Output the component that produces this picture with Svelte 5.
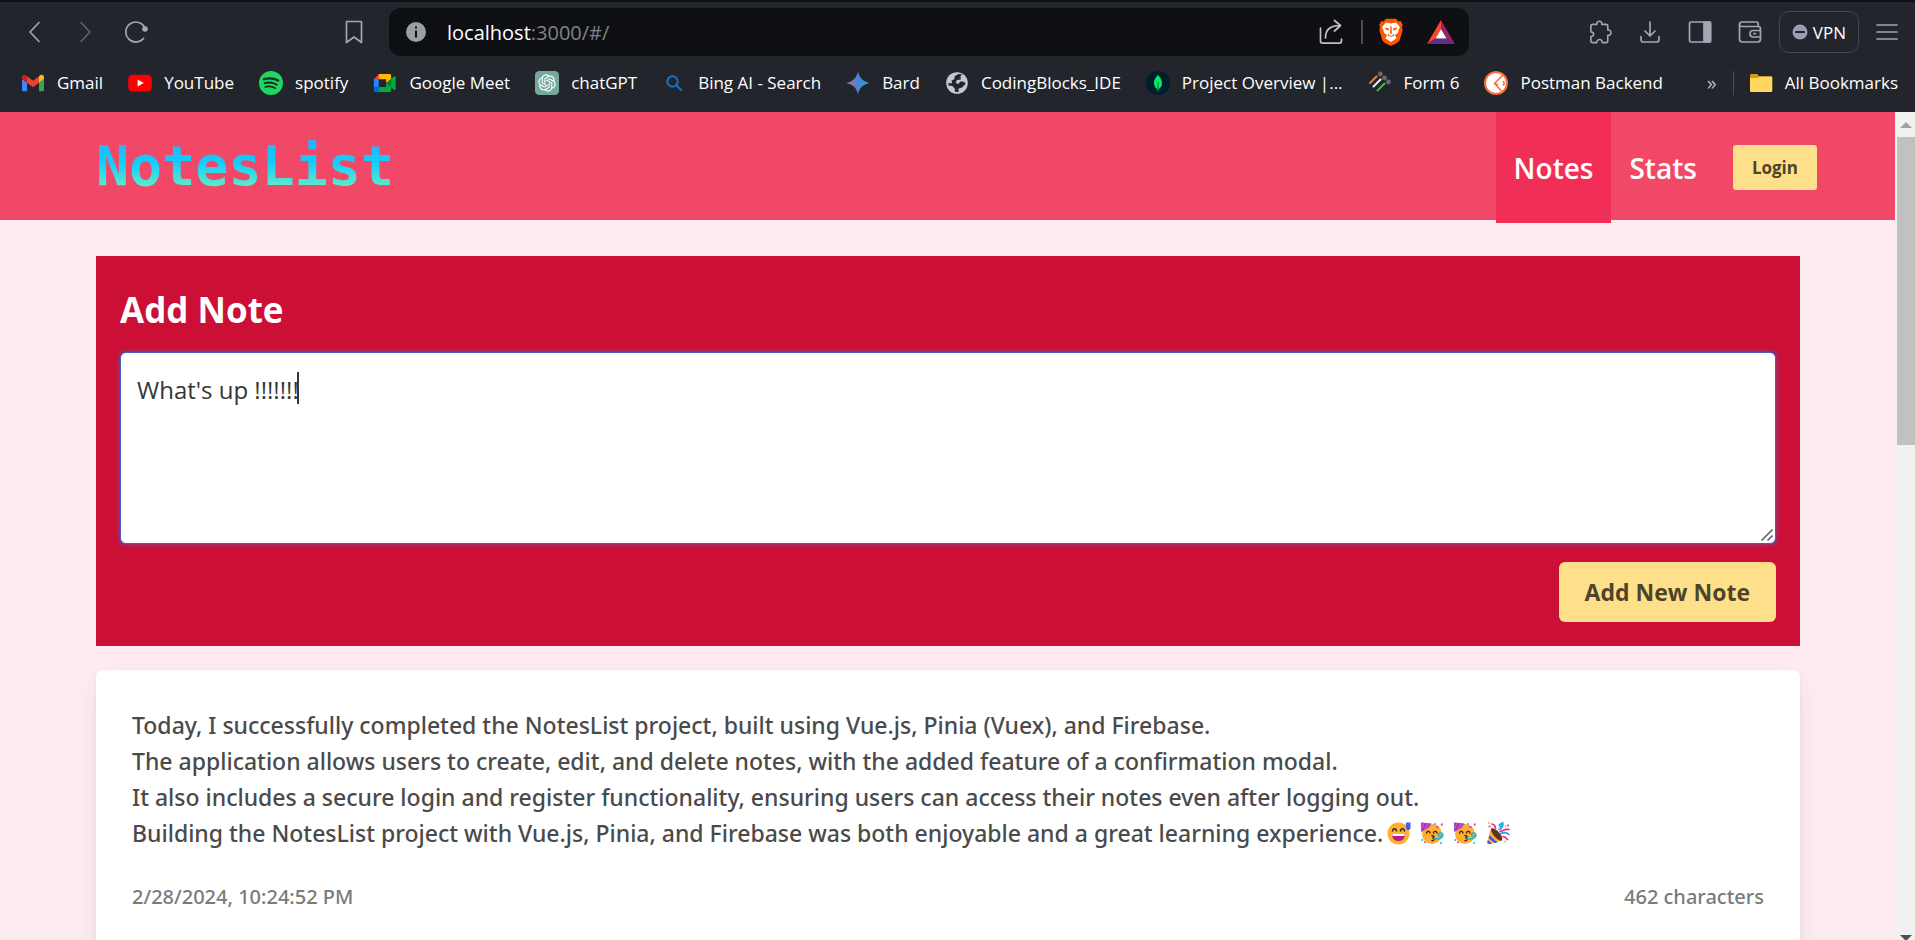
<script lang="ts">
  const bookmarks = [
    { icon: 'gmail', label: 'Gmail' },
    { icon: 'youtube', label: 'YouTube' },
    { icon: 'spotify', label: 'spotify' },
    { icon: 'meet', label: 'Google Meet' },
    { icon: 'gpt', label: 'chatGPT' },
    { icon: 'search', label: 'Bing AI - Search' },
    { icon: 'bard', label: 'Bard' },
    { icon: 'globe', label: 'CodingBlocks_IDE' },
    { icon: 'leaf', label: 'Project Overview |...' },
    { icon: 'form', label: 'Form 6' },
    { icon: 'postman', label: 'Postman Backend' },
  ];
  let draft = $state("What's up !!!!!!!");
  const note = {
    lines: [
      'Today, I successfully completed the NotesList project, built using Vue.js, Pinia (Vuex), and Firebase.',
      'The application allows users to create, edit, and delete notes, with the added feature of a confirmation modal.',
      'It also includes a secure login and register functionality, ensuring users can access their notes even after logging out.',
    ],
    last: 'Building the NotesList project with Vue.js, Pinia, and Firebase was both enjoyable and a great learning experience.',
    date: '2/28/2024, 10:24:52 PM',
    length: '462 characters',
  };
</script>

{#snippet favicon(name: string)}
  {#if name === 'gmail'}
    <svg class="fav" viewBox="48 27 96 96"><path fill="#4285f4" d="M58 108h14V74L52 59v43c0 3.32 2.69 6 6 6"/><path fill="#34a853" d="M120 108h14c3.32 0 6-2.69 6-6V59l-20 15"/><path fill="#fbbc04" d="M120 48v26l20-15v-8c0-7.42-8.47-11.65-14.4-7.2"/><path fill="#ea4335" d="M72 74V48l24 18 24-18v26L96 92"/><path fill="#c5221f" d="M52 51v8l20 15V48l-5.6-4.2c-5.94-4.45-14.4-.22-14.4 7.2"/></svg>
  {:else if name === 'youtube'}
    <svg class="fav" viewBox="0 0 24 24"><rect x="0.3" y="3.8" width="23.4" height="16.6" rx="4.2" fill="#f00"/><path fill="#fff" d="M9.6 8.4v7.2l6.2-3.6z"/></svg>
  {:else if name === 'spotify'}
    <svg class="fav" viewBox="0 0 24 24"><circle cx="12" cy="12" r="12" fill="#1ed760"/><g fill="none" stroke="#1c2a24" stroke-linecap="round"><path stroke-width="2.3" d="M5 8.2c4.800-1.400 10.200-.9 14.200 1.400"/><path stroke-width="1.900" d="M5.600 12.200c4-1.200 8.700-.7 12.200 1.500"/><path stroke-width="1.600" d="M6.200 15.900c3.500-.9 7.200-.5 10.100 1.300"/></g></svg>
  {:else if name === 'meet'}
    <svg class="fav" viewBox="-3 -12 96 96"><path fill="#00832d" d="M49.500 36l8.530 9.750 11.470 7.330 2-17.020-2-16.640-11.690 6.440z"/><path fill="#0066da" d="M0 51.500V66c0 3.315 2.685 6 6 6h14.500l3-10.960-3-9.540-9.950-3z"/><path fill="#e94235" d="M20.500 0L0 20.500l10.550 3 9.950-3 2.950-9.410z"/><path fill="#2684fc" d="M20.500 20.500H0v31h20.500z"/><path fill="#22252c" d="M20.500 20.500h29v31h-29z"/><path fill="#00ac47" d="M82.600 8.680L69.500 19.420v33.660l13.160 10.790c1.970 1.540 4.850.135 4.850-2.370V11c0-2.535-2.945-3.925-4.910-2.320zM49.500 36v15.500h-29V72h43c3.315 0 6-2.685 6-6V53.080z"/><path fill="#ffba00" d="M63.500 0h-43v20.500h29V36l20-16.570V6c0-3.315-2.685-6-6-6z"/></svg>
  {:else if name === 'gpt'}
    <svg class="fav" viewBox="-4.500 -4.500 33 33"><rect x="-4.500" y="-4.500" width="33" height="33" rx="6" fill="#74aa9c"/><path fill="#fff" d="M22.2819 9.8211a5.9847 5.9847 0 0 0-.5157-4.9108 6.0462 6.0462 0 0 0-6.5098-2.9A6.0651 6.0651 0 0 0 4.9807 4.1818a5.9847 5.9847 0 0 0-3.9977 2.9 6.0462 6.0462 0 0 0 .7427 7.0966 5.98 5.98 0 0 0 .511 4.9107 6.051 6.051 0 0 0 6.5146 2.9001A5.9847 5.9847 0 0 0 13.2599 24a6.0557 6.0557 0 0 0 5.7718-4.2058 5.9894 5.9894 0 0 0 3.9977-2.9001 6.0557 6.0557 0 0 0-.7475-7.0729zm-9.022 12.6081a4.4755 4.4755 0 0 1-2.8764-1.0408l.1419-.0804 4.7783-2.7582a.7948.7948 0 0 0 .3927-.6813v-6.7369l2.02 1.1686a.071.071 0 0 1 .038.052v5.5826a4.504 4.504 0 0 1-4.4945 4.4944zm-9.6607-4.1254a4.4708 4.4708 0 0 1-.5346-3.0137l.142.0852 4.783 2.7582a.7712.7712 0 0 0 .7806 0l5.8428-3.3685v2.3324a.0804.0804 0 0 1-.0332.0615L9.74 19.9502a4.4992 4.4992 0 0 1-6.1408-1.6464zM2.3408 7.8956a4.485 4.485 0 0 1 2.3655-1.9728V11.6a.7664.7664 0 0 0 .3879.6765l5.8144 3.3543-2.0201 1.1685a.0757.0757 0 0 1-.071 0l-4.8303-2.7865A4.504 4.504 0 0 1 2.3408 7.872zm16.5963 3.8558L13.1038 8.364 15.1192 7.2a.0757.0757 0 0 1 .071 0l4.8303 2.7913a4.4944 4.4944 0 0 1-.6765 8.1042v-5.6772a.79.79 0 0 0-.407-.667zm2.0107-3.0231l-.142-.0852-4.7735-2.7818a.7759.7759 0 0 0-.7854 0L9.409 9.2297V6.8974a.0662.0662 0 0 1 .0284-.0615l4.8303-2.7866a4.4992 4.4992 0 0 1 6.6802 4.66zM8.3065 12.863l-2.02-1.1638a.0804.0804 0 0 1-.038-.0567V6.0742a4.4992 4.4992 0 0 1 7.3757-3.4537l-.142.0805L8.704 5.459a.7948.7948 0 0 0-.3927.6813zm1.0976-2.3654l2.602-1.4998 2.6069 1.4998v2.9994l-2.5974 1.4997-2.6067-1.4997Z"/></svg>
  {:else if name === 'search'}
    <svg class="fav" viewBox="0 0 24 24" fill="none" stroke="#1078d4" stroke-width="1.900" stroke-linecap="round"><circle cx="10.500" cy="10.500" r="5.200"/><path d="M14.400 14.400 19 19"/></svg>
  {:else if name === 'bard'}
    <svg class="fav" viewBox="0 0 24 24"><defs><linearGradient id="bardFill"><stop offset="0" stop-color="#b66a97"/><stop offset=".5" stop-color="#4d83d2"/><stop offset="1" stop-color="#1fa8e8"/></linearGradient></defs><path fill="url(#bardFill)" d="M12 0.500C13.400 6.600 17 10.600 23.500 12 17 13.400 13.400 17 12 23.500 10.600 17 7 13.400.5 12 7 10.600 10.600 6.600 12 .5z"/></svg>
  {:else if name === 'globe'}
    <svg class="fav" viewBox="0 0 24 24"><circle cx="12" cy="12" r="10.800" fill="#c6c8cd"/><path fill="#22252c" d="M13.500 3.100 9.600 5.200 9.400 8.300 6.500 9.600 7.200 12.300H3.200l.3 2.200 4 .4 2.200 2.600.2 3.300 3.800.2-.3-3.200 3.600-1.400 3.600-3.400-1.500-2.200-3.900-.2-1.700 2.300-2.800-.8 1.200-3.200 3.900-.5-.3-3.500 1.700-1.600z"/></svg>
  {:else if name === 'leaf'}
    <svg class="fav" viewBox="0 0 24 24"><circle cx="12" cy="12" r="12" fill="#001e2b"/><path fill="#00ed64" d="M12 3.500c.5 1.800 4 3.700 4 8.600 0 3.400-1.800 5-3.400 6.200L12.300 20.500h-.6l-.3-2.200C9.800 17.100 8 15.500 8 12.100c0-4.900 3.500-6.800 4-8.600z"/><path stroke="#001e2b" stroke-width=".7" d="M12 10.500v8"/></svg>
  {:else if name === 'form'}
    <svg class="fav" viewBox="0 0 24 24" stroke-linecap="round"><g stroke-width="2"><path stroke="#e8852a" d="M2 12 8.500 5.500"/><path stroke="#f2f2f2" d="M5.500 15.500 12.500 8.500"/><path stroke="#42b648" d="M9.500 19.500 16.500 12.500"/></g><g fill="#65686d"><circle cx="12.300" cy="3" r="2.400"/><circle cx="16.500" cy="7" r="2.400"/><circle cx="20.500" cy="11" r="2.400"/></g></svg>
  {:else if name === 'postman'}
    <svg class="fav" viewBox="0 0 24 24"><circle cx="12" cy="12" r="11" fill="#fff" stroke="#ff6c37" stroke-width="2"/><path fill="none" stroke="#ff6c37" stroke-width="1.600" stroke-linejoin="round" d="M18.500 4.500 10.500 12.500 17.500 20M11 12.700l3 1M19 10c1.500 1.500 1.500 3 0 4.500"/></svg>
  {/if}
{/snippet}

{#snippet party()}
  <svg class="emoji" viewBox="0 0 24 24" aria-hidden="true">
    <circle cx="12" cy="13" r="10" fill="#ffb02e"/>
    <path fill="#8b3fc7" d="M1 1.500 11.500 2.500 9 6.500 1.200 11z"/>
    <path stroke="#ef4fb0" stroke-width="1.300" d="M4 1.800 2 7M8 2.200 4.500 9M11 3 8 7"/>
    <g fill="none" stroke="#402a32" stroke-width="1.500" stroke-linecap="round"><path d="M6.500 12c.4-2.500 3.100-2.500 3.500 0M13.500 12c.4-2.500 3.100-2.500 3.500 0M12 14.500c2.600 0 2.600 2.300.3 2.500 2.300.2 2.300 2.700-.3 2.700"/></g>
    <path fill="none" stroke="#26b6d5" stroke-width="1.700" stroke-linecap="round" d="M14 17.500c4 1.300 8.800-.2 8.800-3.500 0-2.700-4.300-2.600-4.300-.3 0 1.300 1.400 1.600 2.200.9"/>
    <g fill="#f03ca5"><path d="m17 4.500 2 1.500-1 1.500-2-1.500zM21.500 2l1.500 1-1 2-1.500-1zM4 20.500h2V22H4z"/></g>
    <g fill="#26b6d5"><circle cx="15" cy="3" r="1"/><circle cx="2.300" cy="19" r="1"/><circle cx="21" cy="22" r="1"/></g>
  </svg>
{/snippet}

<div class="window">
  <header class="chrome">
    <div class="toolbar">
      <div class="history">
        <button aria-label="Back"><svg width="24" height="24" viewBox="0 0 24 24"><path d="M16 2.500 7 12l9 9.500"/></svg></button>
        <button aria-label="Forward" class="dim"><svg width="24" height="24" viewBox="0 0 24 24"><path d="M7 2.500 16 12 7 21.500"/></svg></button>
        <button aria-label="Reload"><svg width="24" height="24" viewBox="0 0 24 24"><path d="M18.500 18.500A10 10 0 1 1 19.500 7"/><circle cx="20" cy="9" r="2.800" fill="#a1a6b5" stroke="none"/></svg></button>
        <button aria-label="Bookmark this tab" class="save"><svg width="24" height="24" viewBox="0 0 24 24"><path d="M4.500 1.500h15v21L12 17l-7.500 5.500z"/></svg></button>
      </div>
      <div class="address">
        <svg width="20" height="20" viewBox="0 0 20 20"><circle cx="10" cy="10" r="10" fill="#9b9ea5"/><path fill="#0e0f13" d="M9 4.500h2v2H9zM9 8.500h2v7H9z"/></svg>
        <a class="url" href="#/"><span>localhost</span>:3000/#/</a>
        <svg class="share" width="26" height="26" viewBox="0 0 26 26" fill="none" stroke="#c0c1c5" stroke-width="1.700" stroke-linecap="round" stroke-linejoin="round"><path d="M2.500 9v13c0 1.400.8 2.200 2.200 2.200h16.600c1.400 0 2.200-.8 2.200-2.200v-2M7.500 19c0-8 4-12.500 14.500-12.500M16.500 1.500 22.500 6.500 16.500 12"/></svg>
        <i class="bar"></i>
        <svg class="brave" width="24" height="28" viewBox="1 0 24 28"><path fill="#ff5500" d="M8 .8h10l2.400 2.600 2.400-.3 2 3.800-.9 2.500.8 2.600-3 10.200c-.5 1.500-3.200 3.200-8.700 5.600C7.500 25.400 4.800 23.700 4.300 22.200l-3-10.200.8-2.600-.9-2.500 2-3.800 2.400.3z"/><path fill="#fff" d="M13 5.500c1.600 0 3.400-.9 5.600-.6l3.400 4.300c-.4 1.200-1.900 2.400-1.600 3.600.2 1-.2 1.800-1 2.500l-2.600 1.900 1.800 3L13 24l-5.600-3.800 1.800-3-2.600-1.900c-.8-.7-1.200-1.500-1-2.500.3-1.200-1.200-2.400-1.600-3.600l3.400-4.300c2.200-.3 4 .6 5.600.6z"/><path fill="#ff5500" d="m7 9.500 4 .9-.5 2.300-3.300-1.600zM19 9.500l-4 .9.500 2.300 3.300-1.600zM12.400 8h1.200l.3 7.400-.9.600-.9-.6zM9.500 15.300l1.700 1.800 1.800 1 1.800-1 1.700-1.800-.8 3.300-1.500-.5-1.200 1.200-1.200-1.200-1.500.5z"/></svg>
        <svg width="28" height="24" viewBox="0 0 28 24"><path fill="#ff4724" d="M14 0 0 24 8.500 18.500 14 9z"/><path fill="#9e1f63" d="M14 0v9l5.500 9.500L28 24z"/><path fill="#662d91" d="M0 24h28l-8.500-5.500h-11z"/><path fill="#fff" d="m14 9 5.500 9.500h-11z"/></svg>
      </div>
      <div class="tools">
        <button aria-label="Extensions"><svg width="24" height="24" viewBox="0 0 25 25"><path d="M3 6.500c0-1.300.8-2 2-2h4.200c-.6-4.200 5.800-4.200 5.200 0h4.200c1.300 0 2 .7 2 2v4c4.500-.6 4.500 6 0 5.400v5.600c0 1.300-.8 2-2 2h-3.800c.2-4.200-5.800-4.200-5.600 0H5c-1.300 0-2-.7-2-2v-4.300c3.900.5 3.900-5.200 0-4.700z"/></svg></button>
        <button aria-label="Downloads"><svg width="24" height="24" viewBox="0 0 24 24"><path d="M12 2v13.500M7 11l5 5 5-5M3 16.500v3c0 1.700.8 2.500 2.500 2.500h13c1.700 0 2.500-.8 2.500-2.500v-3"/></svg></button>
        <button aria-label="Sidebar"><svg width="24" height="24" viewBox="0 0 24 24"><rect x="1.500" y="2" width="21" height="20" rx="1.500"/><path fill="#a1a6b5" d="M16 2h6.500v20H16z"/></svg></button>
        <button aria-label="Wallet"><svg width="24" height="24" viewBox="0 0 24 24"><path d="M1.500 4.500c0-1.500.8-2.500 2.500-2.500h14.500c1 0 1.700.7 1.700 2v2.500H4c-1.500 0-2.500-.8-2.500-2zM1.500 4.500V19c0 2 1 3 3 3h15c2 0 3-1 3-3V9c0-1.700-.7-2.500-2.300-2.500M22.500 10.500H15c-4 0-4 6.500 0 6.500h7.500M16 13.700h1.500"/></svg></button>
        <button class="vpn"><svg width="16" height="16" viewBox="0 0 16 16"><circle cx="8" cy="8" r="7.500" fill="#9a9bb5" stroke="none"/><path stroke="#22252c" stroke-width="2" d="M4 8h8"/></svg>VPN</button>
        <button aria-label="Menu"><svg width="22" height="22" viewBox="0 0 22 22"><path d="M1 4h20M1 11h20M1 18h20"/></svg></button>
      </div>
    </div>
    <nav class="bookmarks" aria-label="Bookmarks">
      {#each bookmarks as b}
        <a href="#/">{@render favicon(b.icon)}<span>{b.label}</span></a>
      {/each}
      <button class="more">»</button>
      <i class="bar"></i>
      <a class="all" href="#/">
        <svg class="fav" viewBox="0 0 24 24"><path fill="#d69a0b" d="M1 4.500C1 3.500 1.600 3 2.500 3h5.700l2 2.500H22c.8 0 1.200.5 1.200 1.200V8H1z"/><path fill="#ffd75e" d="M1.500 7h7L10.500 5.500H22c.8 0 1.300.5 1.300 1.300v12.900c0 .8-.5 1.300-1.300 1.300H2.300c-.8 0-1.300-.5-1.300-1.300V7.500z"/></svg>
        <span>All Bookmarks</span>
      </a>
    </nav>
  </header>

  <div class="viewport">
    <div class="page">
      <nav class="navbar">
        <a class="brand" href="#/">NotesList</a>
        <div class="menu">
          <a class="active" href="#/">Notes</a>
          <a href="#/stats">Stats</a>
          <button class="btn login">Login</button>
        </div>
      </nav>
      <main>
        <form class="add" onsubmit={(e) => e.preventDefault()}>
          <label for="draft">Add Note</label>
          <div class="field">
            <textarea id="draft" bind:value={draft} spellcheck="false"></textarea>
            <i class="caret"></i>
            <svg class="grip" width="14" height="14" viewBox="0 0 14 14" stroke="#555" stroke-width="1.500"><path d="M1.500 12.500 12.500 1.500M7.500 12.500l5-5"/></svg>
          </div>
          <button class="btn submit">Add New Note</button>
        </form>
        <article class="card">
          {#each note.lines as line}
            <p>{line}</p>
          {/each}
          <p class="last">{note.last}<span class="emojis">
            <svg class="emoji" viewBox="0 0 24 24" aria-hidden="true"><circle cx="11.500" cy="12.500" r="11" fill="#ffb02e"/><path fill="#bb1d80" d="M5 13h13c0 4.500-2.500 7-6.500 7S5 17.500 5 13z"/><path fill="#fff" d="M5.200 13h12.600l-.5 2H5.700z"/><g fill="none" stroke="#402a32" stroke-width="1.500" stroke-linecap="round"><path d="M5.500 10c.4-3 3.600-3 4 0M13.500 10c.4-3 3.600-3 4 0"/></g><path fill="#3f5fff" d="M19 1.500h4.500V7c0 2.600-4.500 2.600-4.500 0z"/></svg>
            {@render party()}
            {@render party()}
            <svg class="emoji" viewBox="0 0 24 24" aria-hidden="true"><path fill="#ffb02e" d="M4.500 8.500 15.500 20 1 23.500z"/><path fill="#4055e0" d="M3.300 14l8.200 7.500-2.500.8L2.600 17zM1.800 19l4 3.500-2.300.7-2.300-1.700z"/><path fill="#5b3327" d="M5 7.500c3-2 13 6.500 11 12-4 1.500-12-8-11-12z"/><g fill="none" stroke-width="1.700" stroke-linecap="round"><path stroke="#17a9dc" d="M13 8.500c3.500-.5 4-6 1.500-5.500-2 .6-.5 4 1.500 2.500 1-.8 1-2.500.5-4M15 12.500c3-1.500 6-1 8 1"/><path stroke="#f0268c" d="M9.500 7.500C9.500 5 8 3.500 6 3M14 10.500c3 0 4-3 9-2M17 15.500c1.500 0 3 1 4.500 3"/></g><g fill="#f0268c"><circle cx="3.500" cy="5.500" r="1"/><circle cx="22" cy="4.500" r="1"/></g><g fill="#ffb02e"><circle cx="19.500" cy="5.500" r="1"/><circle cx="19" cy="20.500" r="1"/><circle cx="3" cy="2" r="1"/></g></svg>
          </span></p>
          <footer><time>{note.date}</time><span>{note.length}</span></footer>
        </article>
      </main>
    </div>
    <div class="scroll" aria-hidden="true">
      <svg width="12" height="25" viewBox="0 0 12 25"><path fill="#a3a3a3" d="M0 16 6 10l6 6z"/></svg>
      <div class="thumb"></div>
      <svg class="down" width="12" height="5" viewBox="0 0 12 5"><path fill="#505050" d="M0 0h12L7 5H5z"/></svg>
    </div>
  </div>
</div>

<style>
  :global(body) { overflow: hidden; }
  * { box-sizing: border-box; }
  .window { display: flex; flex-direction: column; height: 100vh; font-family: "Open Sans", "Noto Sans", sans-serif; }
  a { color: inherit; text-decoration: none; }
  button { font: inherit; color: inherit; border: 0; background: none; padding: 0; cursor: pointer; }
  svg { display: block; flex: none; }

  .chrome { background: #22252c; border-top: 2px solid #0e0f13; color: #fff; height: 112px; flex: none; }
  .toolbar { display: flex; align-items: center; height: 60px; padding-right: 17px; }
  .toolbar button svg { fill: none; stroke: #a1a6b5; stroke-width: 1.700px; stroke-linecap: round; stroke-linejoin: round; }
  .toolbar button svg circle { stroke: none; }
  .history { display: flex; width: 389px; padding: 0 23px; gap: 27px; flex: none; }
  .history .dim { opacity: .45; }
  .history .save { margin-left: auto; }
  .address { flex: 1; display: flex; align-items: center; height: 48px; padding: 0 14px 0 17px; background: #0e0f13; border-radius: 12px; }
  .url { flex: 1; margin-left: 21px; font-size: 20px; color: #80828a; }
  .url span { color: #fff; }
  .share { margin-right: 17px; }
  .bar { width: 2px; height: 24px; background: #4c4f57; flex: none; }
  .brave { margin: 0 24px 0 16px; }
  .tools { display: flex; align-items: center; gap: 26px; margin-left: 119px; flex: none; }
  .tools .vpn { display: flex; align-items: center; gap: 5px; height: 42px; padding: 0 12px; border: 1px solid #434752; border-radius: 10px; font-size: 17px; margin: 0 -9px; }
  .bookmarks { display: flex; align-items: center; gap: 25px; height: 42px; padding: 0 17px 0 21px; font-size: 17px; line-height: 24px; white-space: nowrap; }
  .bookmarks a { display: flex; align-items: center; gap: 12px; }
  .fav { width: 24px; height: 24px; }
  .more { margin-left: auto; margin-right: -9px; color: #b9bcc6; font-size: 20px; }
  .bookmarks .bar { width: 1px; background: #4c4f57; }
  .all { margin-left: -10px; }

  .viewport { display: flex; flex: 1; min-height: 0; }
  .page { flex: 1; min-width: 0; overflow: hidden; background: #feebef; }
  .navbar { display: flex; justify-content: space-between; height: 108px; padding: 0 78px 0 96px; background: #f24868; color: #fff; }
  .brand { align-self: center; font: bold 55px/64px "DejaVu Sans Mono", monospace; background: linear-gradient(to bottom, #2fa8ff 0%, #12cdfb 45%, #84fab0 100%); background-clip: text; color: transparent; }
  .menu { display: flex; height: 111px; font-size: 28px; font-weight: 600; }
  .menu a { display: flex; align-items: center; padding: 0 18px; }
  .menu .active { background: #f02e56; }
  .btn { background: #ffe08a; color: #4d442b; font-weight: 700; border-radius: 6px; }
  .login { align-self: center; height: 45px; padding: 0 19px; margin-left: 18px; font-size: 17px; border-radius: 3px; }
  main { display: grid; gap: 24px; padding: 36px 95px 0 96px; }
  .add { display: grid; padding: 24px; background: #cc0f35; }
  .add label { color: #fff; font-size: 35px; font-weight: 700; line-height: 60px; margin-bottom: 12px; }
  .field { position: relative; height: 192px; }
  textarea { display: block; width: 100%; height: 192px; padding: 19px 16px; border: 1px solid #485fc7; border-radius: 6px; outline: 0; resize: none; background: #fff; color: #363636; font: 24px/36px "Open Sans", "Noto Sans", sans-serif; box-shadow: 0 0 0 3px rgba(72, 95, 199, .25); }
  .caret { position: absolute; left: 177px; top: 20px; width: 2px; height: 32px; background: #363636; }
  .grip { position: absolute; right: 2px; bottom: 2px; }
  .submit { justify-self: end; height: 60px; margin-top: 18px; padding: 0 26px; font-size: 23px; }
  .card { height: 400px; padding: 37px 36px; background: #fff; border-radius: 6px; color: #4a4a4a; font-family: "Noto Sans", sans-serif; font-size: 23px; font-weight: 500; line-height: 36px; box-shadow: 0 12px 24px -3px rgba(10, 10, 10, .1), 0 0 0 1px rgba(10, 10, 10, .02); }
  .card p { margin: 0; white-space: nowrap; }
  .last, .emojis { display: flex; align-items: center; }
  .emojis { gap: 9px; margin-left: 4px; }
  .emoji { width: 24px; height: 24px; }
  .card footer { display: flex; justify-content: space-between; margin-top: 28px; color: #7a7a7a; font-size: 20px; font-weight: 500; }
  .scroll { display: flex; flex-direction: column; align-items: center; width: 20px; padding-left: 2px; background: #f1f1f1; flex: none; }
  .thumb { width: 100%; height: 308px; background: #c1c1c1; }
  .down { margin-top: auto; }
</style>
